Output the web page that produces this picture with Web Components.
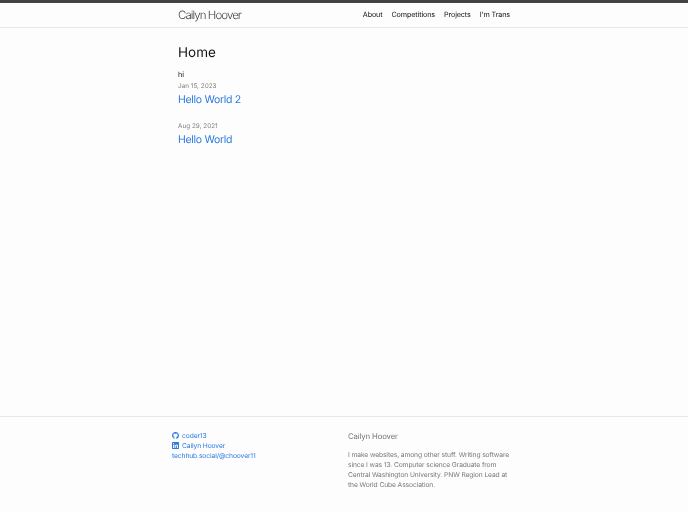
<!DOCTYPE html>
<html lang="en">
<head>
<meta charset="utf-8">
<title>Cailyn Hoover</title>
<style>
  html, body { margin: 0; padding: 0; height: 100%; }
  body {
    width: 688px;
    height: 512px;
    overflow: hidden;
    display: flex;
    flex-direction: column;
    background: #fdfdfd;
    color: #111;
    font-family: Inter, "Liberation Sans", Arial, sans-serif;
    text-rendering: geometricPrecision;
  }
  site-main { flex: 1; }
  /* own layers, so text gets grey antialiasing instead of colour fringes */
  site-header, site-main, site-footer { will-change: transform; }
</style>
</head>
<body>
<site-header title="Cailyn Hoover">
  <a slot="nav" href="#">About</a>
  <a slot="nav" href="#">Competitions</a>
  <a slot="nav" href="#">Projects</a>
  <a slot="nav" href="#">I'm Trans</a>
</site-header>
<site-main>
  <post-item date="Jan 15, 2023" title="Hello World 2"></post-item>
  <post-item date="Aug 29, 2021" title="Hello World"></post-item>
</site-main>
<site-footer>
  <social-link slot="links" text="coder13" icon="github"></social-link>
  <social-link slot="links" text="Cailyn Hoover" icon="linkedin"></social-link>
  <social-link slot="links" text="techhub.social/@choover11"></social-link>
</site-footer>

<script>
// top bar with the site title and the nav links
class SiteHeader extends HTMLElement {
    constructor() {
        super();
        this.attachShadow({ mode: 'open' });
        const title = this.getAttribute('title');
        this.shadowRoot.innerHTML = `
            <style>
                :host {
                    display: block;
                    height: 24px;
                    border-top: 3px solid #424242;
                    border-bottom: 1px solid #e8e8e8;
                }
                #wrap {
                    width: 332px;
                    margin-left: 178px;
                    height: 24px;
                    display: flex;
                    align-items: center;
                    justify-content: space-between;
                }
                #title {
                    font-size: 11.5px;
                    letter-spacing: -0.95px;
                    color: #424242;
                    font-weight: 300;
                }
                nav {
                    display: flex;
                    gap: 9px;
                    padding-bottom: 2px;
                    font-size: 7.2px;
                    letter-spacing: -0.12px;
                }
                ::slotted(a) { color: #111; text-decoration: none; }
            </style>
            <div id="wrap">
                <div id="title">${title}</div>
                <nav><slot name="nav"></slot></nav>
            </div>
        `;
    }
}

// main column, holds the page heading and the post list
class SiteMain extends HTMLElement {
    constructor() {
        super();
        this.attachShadow({ mode: 'open' });
        this.shadowRoot.innerHTML = `
            <style>
                :host { display: block; padding: 15px 0 0 178px; }
                h1 { margin: 0; font-size: 13.5px; line-height: 20px; font-weight: 400; color: #111; }
                p { margin: 6px 0 0; font-size: 7.3px; line-height: 12px; color: #111; }
            </style>
            <h1>Home</h1>
            <p>hi</p>
            <slot></slot>
        `;
    }
}

class PostItem extends HTMLElement {
    constructor() {
        super();
        this.attachShadow({ mode: 'open' });
        const date = this.getAttribute('date');
        const title = this.getAttribute('title');
        this.shadowRoot.innerHTML = `
            <style>
                :host { display: block; margin-bottom: 13px; }
                #date { font-size: 6.4px; line-height: 10px; color: #828282; }
                a {
                    display: block;
                    margin-top: 1px;
                    font-size: 10.5px;
                    letter-spacing: -0.3px;
                    line-height: 16px;
                    color: #2a7ae2;
                    text-decoration: none;
                }
            </style>
            <div id="date">${date}</div>
            <a href="#">${title}</a>
        `;
    }
}

// icon + text link in the footer
class SocialLink extends HTMLElement {
    constructor() {
        super();
        this.attachShadow({ mode: 'open' });
        const icons = {
            github: '<path d="M8 0C3.58 0 0 3.58 0 8c0 3.54 2.29 6.53 5.47 7.59.4.07.55-.17.55-.38 0-.19-.01-.82-.01-1.49-2.01.37-2.53-.49-2.69-.94-.09-.23-.48-.94-.82-1.13-.28-.15-.68-.52-.01-.53.63-.01 1.08.58 1.23.82.72 1.21 1.87.87 2.33.66.07-.52.28-.87.51-1.07-1.78-.2-3.64-.89-3.64-3.95 0-.87.31-1.59.82-2.15-.08-.2-.36-1.02.08-2.12 0 0 .67-.21 2.2.82.64-.18 1.32-.27 2-.27s1.36.09 2 .27c1.53-1.04 2.2-.82 2.2-.82.44 1.1.16 1.92.08 2.12.51.56.82 1.27.82 2.15 0 3.07-1.87 3.75-3.65 3.95.29.25.54.73.54 1.48 0 1.07-.01 1.93-.01 2.2 0 .21.15.46.55.38A8.01 8.01 0 0 0 16 8c0-4.42-3.58-8-8-8z"/>',
            linkedin: '<path d="M14.5 0h-13C.7 0 0 .7 0 1.5v13c0 .8.7 1.500 1.500 1.500h13c.8 0 1.500-.7 1.500-1.500v-13c0-.8-.7-1.500-1.500-1.500zM4.800 13.600H2.400V6h2.400v7.600zM3.600 5C2.800 5 2.200 4.400 2.200 3.600S2.800 2.200 3.600 2.200 5 2.800 5 3.600 4.400 5 3.600 5zm10 8.600h-2.400V9.900c0-.9 0-2-1.200-2s-1.400 1-1.400 2v3.700H6.200V6h2.300v1h.03c.3-.6 1.100-1.200 2.300-1.200 2.400 0 2.800 1.600 2.800 3.700v4.100z"/>'
        };
        const icon = icons[this.getAttribute('icon')];
        const text = this.getAttribute('text');
        this.shadowRoot.innerHTML = `
            <style>
                :host { display: block; height: 10px; line-height: 10px; font-size: 6.7px; letter-spacing: -0.1px; }
                a { display: flex; align-items: center; gap: 3px; color: #2a7ae2; text-decoration: none; }
                svg { width: 7px; height: 7px; fill: #2a7ae2; margin-top: -1px; }
                span { white-space: nowrap; }
            </style>
            <a href="#">${icon ? `<svg viewBox="0 0 16 16">${icon}</svg>` : ''}<span>${text}</span></a>
        `;
    }
}

class SiteFooter extends HTMLElement {
    constructor() {
        super();
        this.attachShadow({ mode: 'open' });
        this.shadowRoot.innerHTML = `
            <style>
                :host {
                    display: block;
                    height: 95px;
                    border-top: 1px solid #e8e8e8;
                }
                #wrap {
                    display: grid;
                    grid-template-columns: 176px 165px;
                    margin-left: 172px;
                    padding-top: 14px;
                }
                #name { font-size: 7.8px; letter-spacing: -0.15px; line-height: 11px; color: #777; margin-bottom: 8px; }
                #bio { font-size: 6.7px; letter-spacing: -0.1px; line-height: 10px; color: #777; }
            </style>
            <div id="wrap">
                <div><slot name="links"></slot></div>
                <div>
                    <div id="name">Cailyn Hoover</div>
                    <div id="bio">I make websites, among other stuff. Writing software since I was 13. Computer science Graduate from Central Washington University. PNW Region Lead at the World Cube Association.</div>
                </div>
            </div>
        `;
    }
}

customElements.define('site-header', SiteHeader);
customElements.define('site-main', SiteMain);
customElements.define('post-item', PostItem);
customElements.define('social-link', SocialLink);
customElements.define('site-footer', SiteFooter);
</script>
</body>
</html>
